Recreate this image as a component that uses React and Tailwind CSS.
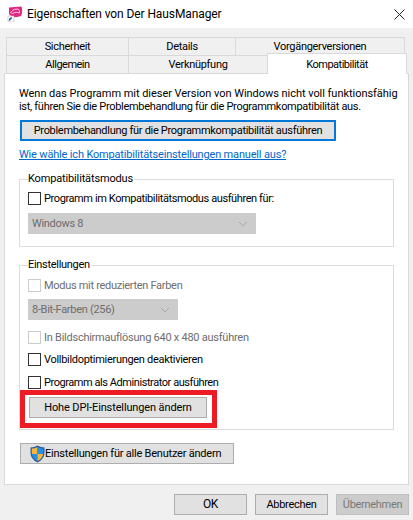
const Check = ({ label, disabled, className = "", labelClass = "" }) => (
  <div className={`flex items-center h-[14px] ${className}`}>
    <span className={`w-[13px] h-[13px] border shrink-0 ${disabled ? "border-[#cccccc] bg-white" : "border-[#333333] bg-white"}`} />
    <span className={`ml-[3px] whitespace-nowrap ${disabled ? "text-[#6d6d6d]" : "text-black"} ${labelClass}`}>{label}</span>
  </div>
);

const Select = ({ value, width, className = "" }) => (
  <div className={`h-[21px] bg-[#cccccc] flex items-center justify-between pl-[4px] pr-[8px] text-[#6d6d6d] ${width} ${className}`}>
    <span>{value}</span>
    <svg width="10" height="6" viewBox="0 0 10 6" fill="none" stroke="#a8a8a8"><path d="M1 1l4 4 4-4" /></svg>
  </div>
);

const Btn = ({ children, className = "", disabled }) => (
  <div className={`h-[21px] flex items-center justify-center border whitespace-nowrap ${disabled ? "bg-[#cccccc] border-[#bfbfbf] text-[#787878]" : "bg-[#e1e1e1] border-[#adadad] text-black"} ${className}`}>
    {children}
  </div>
);

const Tab = ({ children, width, className = "" }) => (
  <div className={`h-[18px] border-t border-l border-r border-[#d9d9d9] bg-[#f0f0f0] flex items-center justify-center ${width} ${className}`}>
    {children}
  </div>
);

const Group = ({ title, className = "", titleClass = "", children }) => (
  <div className={`relative mx-[14px] border border-[#dcdcdc] ${className}`}>
    <span className={`absolute left-[8px] top-[-8px] bg-white pr-[1px] leading-[14px] ${titleClass}`}>{title}</span>
    {children}
  </div>
);

const AppIcon = () => (
  <svg width="16" height="16" viewBox="0 0 16 16" className="shrink-0">
    <path d="M2 1.5 L14 0.5 Q15.5 1 15 7 L14 10 Q8 12 5 11 L2 8 Z" fill="#e0267f" />
    <path d="M3.5 6.5 Q7 2 11 3 Q13.5 4.5 12.5 7 Q9 5 5.5 7.5 Z" fill="none" stroke="#fbc4dc" strokeWidth="1" />
    <rect x="1" y="10" width="6" height="6" fill="#ffffff" stroke="#b5b5b5" strokeWidth="0.6" />
    <path d="M2.5 14.8 Q2.5 12.3 5 12" fill="none" stroke="#1f5fbf" strokeWidth="1.3" />
  </svg>
);

const Shield = () => (
  <svg width="15" height="18" viewBox="0 0 15 18" className="shrink-0">
    <path d="M7.5 .5 Q11 2.5 14.5 2.5 L14.5 8 Q14.5 14 7.5 17.5 Q.5 14 .5 8 L.5 2.5 Q4 2.5 7.5 .5 Z" fill="#2b5f9e" />
    <path d="M7.5 2 L7.5 9 L1.8 9 L1.8 3.6 Q5 3.5 7.5 2 Z" fill="#f6b53c" />
    <path d="M7.5 2 Q10 3.5 13.2 3.6 L13.2 9 L7.5 9 Z" fill="#2a8fe0" />
    <path d="M1.8 9 L7.5 9 L7.5 16 Q2.4 13.5 1.8 9 Z" fill="#2a8fe0" />
    <path d="M7.5 9 L13.2 9 Q12.6 13.5 7.5 16 Z" fill="#f6b53c" />
  </svg>
);

export default function App() {
  return (
    <div className="relative w-[413px] h-[520px] bg-[#f0f0f0] overflow-hidden text-[11px] tracking-[-0.3px] leading-[13px] text-black font-['Roboto',sans-serif]">
      <div className="h-[28px] bg-white flex items-center pl-[7px] pr-[7px]">
        <AppIcon />
        <span className="ml-[4px] text-[12px] tracking-[-0.1px]">Eigenschaften von Der HausManager</span>
        <svg width="11" height="11" viewBox="0 0 11 11" className="ml-auto mr-[1px]" stroke="#222" fill="none"><path d="M.5.5l10 10M10.5.5l-10 10" /></svg>
      </div>

      <div className="mt-[9px] px-[6px] flex h-[18px]">
        <Tab width="w-[123px]">Sicherheit</Tab>
        <Tab width="w-[108px] -ml-px">Details</Tab>
        <Tab width="w-[170px] -ml-px">Vorgängerversionen</Tab>
      </div>
      <div className="px-[6px] flex h-[18px]">
        <Tab width="w-[123px]" className="tracking-[-0.5px]">Allgemein</Tab>
        <Tab width="w-[140px] -ml-px">Verknüpfung</Tab>
      </div>

      <div className="mx-[4px] h-[412px] bg-white border border-[#d9d9d9] pt-[13px]">
        <p className="pl-[14px] whitespace-nowrap">
          <span className="tracking-[-0.04px]">Wenn das Programm mit dieser Version von Windows nicht voll funktionsfähig</span><br />
          ist, führen Sie die Problembehandlung für die Programmkompatibilität aus.
        </p>
        <div className="ml-[15px] mt-[7px] w-[316px] h-[21px] border-2 border-[#0078d7] bg-[#e1e1e1] flex items-center justify-center whitespace-nowrap">
          Problembehandlung für die Programmkompatibilität ausführen
        </div>
        <div className="ml-[14px] mt-[7px] h-[14px] leading-[14px] text-[#0066cc] underline whitespace-nowrap tracking-[-0.17px]">
          Wie wähle ich Kompatibilitätseinstellungen manuell aus?
        </div>

        <Group title="Kompatibilitätsmodus" titleClass="tracking-[-0.15px]" className="mt-[17px] h-[68px]">
          <Check label="Programm im Kompatibilitätsmodus ausführen für:" labelClass="tracking-[-0.4px]" className="ml-[8px] mt-[11px]" />
          <Select value="Windows 8" width="w-[228px]" className="ml-[8px] mt-[8px]" />
        </Group>

        <Group title="Einstellungen" className="mt-[18px] h-[165px]">
          <Check disabled label="Modus mit reduzierten Farben" className="ml-[8px] mt-[12px]" />
          <Select value="8-Bit-Farben (256)" width="w-[150px]" className="ml-[8px] mt-[7px]" />
          <Check disabled label="In Bildschirmauflösung 640 x 480 ausführen" labelClass="tracking-[-0.25px]" className="ml-[8px] mt-[10px]" />
          <Check label="Vollbildoptimierungen deaktivieren" className="ml-[8px] mt-[8px]" />
          <Check label="Programm als Administrator ausführen" labelClass="tracking-[-0.44px]" className="ml-[8px] mt-[9px]" />
          <Btn className="ml-[9px] mt-[8px] w-[178px] tracking-[-0.13px]">Hohe DPI-Einstellungen ändern</Btn>
        </Group>

        <Btn className="ml-[15px] mt-[13px] w-[214px] !justify-start pl-[9px] tracking-[-0.22px]"><Shield /><span>Einstellungen für alle Benutzer ändern</span></Btn>
      </div>

      <div className="mt-[9px] flex justify-end gap-[8px] pr-[4px]">
        <Btn className="w-[73px] text-[12px]">OK</Btn>
        <Btn className="w-[73px]">Abbrechen</Btn>
        <Btn disabled className="w-[73px]">Übernehmen</Btn>
      </div>

      {/* Aktiver Reiter liegt über den anderen */}
      <div className="absolute left-[267px] top-[53px] w-[140px] h-[21px] bg-white border-t border-l border-r border-[#d9d9d9] flex justify-center pt-[4px] tracking-[-0.5px]">Kompatibilität</div>
      {/* Rote Markierung liegt über dem Dialog */}
      <div className="absolute left-[20px] top-[390px] w-[197px] h-[38px] border-[5px] border-[#ed1c24]" />
    </div>
  );
}
